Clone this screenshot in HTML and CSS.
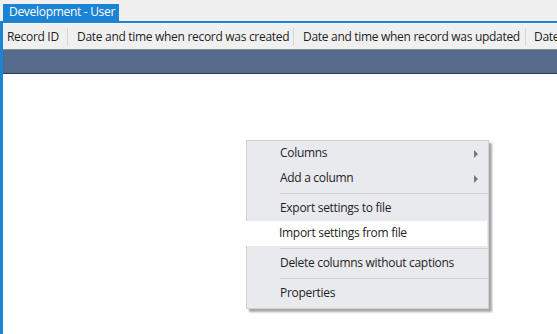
FILE: index.html
```html
<!DOCTYPE html>
<html lang="en">
<head>
    <meta charset="UTF-8">
    <title>Development - User</title>
    <link rel="stylesheet" href="styles.css">
</head>
<body>
    <div class="tabs">
        <div class="tab">Development - User</div>
    </div>
    <div class="doc">
        <div class="grid-head">
            <div class="col col-id">Record ID</div>
            <div class="col col-created">Date and time when record was created</div>
            <div class="col col-updated">Date and time when record was updated</div>
            <div class="col">Date and time when record was deleted</div>
        </div>
        <div class="group-bar"></div>
        <div class="grid-body"></div>
    </div>

    <div class="menu">
        <div class="item">Columns <span class="arrow"></span></div>
        <div class="item">Add a column <span class="arrow"></span></div>
        <div class="sep"></div>
        <div class="item">Export settings to file</div>
        <div class="item hot">Import settings from file</div>
        <div class="sep"></div>
        <div class="item">Delete columns without captions</div>
        <div class="sep"></div>
        <div class="item">Properties</div>
    </div>
</body>
</html>
```

FILE: styles.css
```css
body {
    margin: 0;
    width: 557px;
    height: 334px;
    overflow: hidden;
    font-family: 'Open Sans', 'Noto Sans', sans-serif;
    font-size: 12px;
    letter-spacing: -0.3px;
    color: #1e1e1e;
    background: #f0f0f0;
    position: relative;
}
.tabs {
    height: 23px;
    padding: 4px 0 0 3px;
    box-sizing: border-box;
    border-bottom: 2px solid #1c84d4;
    display: flex;
    align-items: flex-end;
}
.tab {
    background: #1c84d4;
    color: white;
    height: 17px;
    line-height: 16px;
    padding: 0 6px;
    width: 104px;
    white-space: nowrap;
}
.doc {
    border-left: 3px solid #1c84d4;
    height: 311px;
    display: flex;
    flex-direction: column;
    background: white;
}
.grid-head {
    height: 26px;
    flex: none;
    background: #f0f0f0;
    display: flex;
    align-items: center;
    white-space: nowrap;
    overflow: hidden;
    border-top: 1px solid #f7f7f7;
    box-sizing: border-box;
}
.col {
    padding: 0 0 0 4px;
    height: 18px;
    line-height: 17px;
    border-right: 1px solid #d6d6d6;
    flex: none;
    box-sizing: border-box;
}
.col-id { width: 65px; }
.col-created { width: 226px; padding-left: 9px; }
.col-updated { width: 232px; padding-left: 9px; }
.col:last-child { padding-left: 8px; border: none; }
.group-bar {
    height: 25px;
    flex: none;
    background: #566a8b;
    border-top: 1px solid #8a8a8a;
    border-bottom: 1px solid #2e3b52;
    box-sizing: border-box;
}
.grid-body {
    flex: 1;
    background: white;
}
.menu {
    position: absolute;
    left: 246px;
    top: 140px;
    width: 241px;
    background: #e9eaee;
    border: 1px solid #cfd0d4;
    padding: 0 0 2px;
    box-shadow: 3px 3px 2px rgba(0, 0, 0, 0.35);
}
.item {
    height: 25px;
    line-height: 24px;
    padding-left: 33px;
    position: relative;
}
.item.hot {
    background: white;
    margin: 0 1px 0 -1px;
}
.arrow {
    position: absolute;
    right: 10px;
    top: 9px;
    border-left: 4px solid #777;
    border-top: 4px solid transparent;
    border-bottom: 4px solid transparent;
}
.sep {
    height: 1px;
    background: #d0d1d5;
    margin: 2px 0 2px 33px;
}
```
